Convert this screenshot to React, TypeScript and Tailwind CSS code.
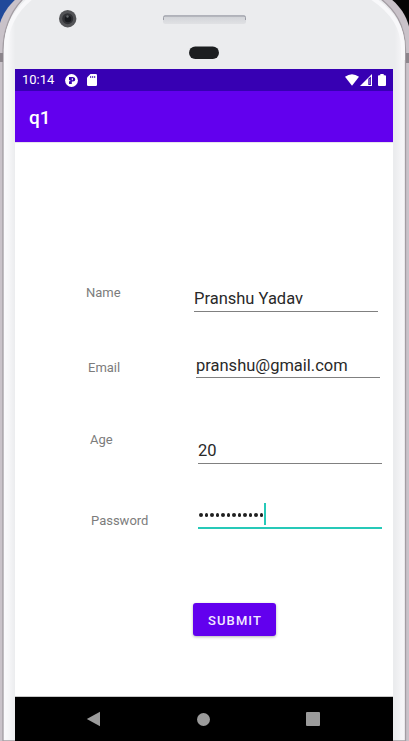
import type { ReactNode } from "react";

function PhoneShell() {
  return (
    <svg className="pointer-events-none absolute inset-0" width="409" height="741" viewBox="0 0 409 741" aria-hidden="true">
      <defs>
        <linearGradient id="face" gradientUnits="userSpaceOnUse" x1="4" y1="0" x2="406" y2="0">
          <stop offset="0" stopColor="#fafafc" />
          <stop offset="0.012" stopColor="#f6f6f8" />
          <stop offset="0.028" stopColor="#ebecee" />
          <stop offset="0.972" stopColor="#ebecee" />
          <stop offset="0.988" stopColor="#f4f4f6" />
          <stop offset="1" stopColor="#f7f6f8" />
        </linearGradient>
        <linearGradient id="speaker" x1="0" y1="0" x2="0" y2="1">
          <stop offset="0" stopColor="#c3c5cb" />
          <stop offset="0.3" stopColor="#d4d6da" />
          <stop offset="1" stopColor="#e0e1e4" />
        </linearGradient>
      </defs>
      <rect width="100" height="60" fill="#20499a" />
      <rect x="300" width="109" height="80" fill="#050505" />
      <path d="M-3 741V43C-3 20 7 5 22 -6H384C400 4 411 19 411 43V741Z" fill="#c9c2c9" />
      <path d="M3 741V50C3.500 26 12 9 26 -4H377C395 9 405.500 25 405.500 50V741Z" fill="url(#face)" stroke="#a39da3" strokeWidth="1.300" />
      <path d="M6 60V48C6 27 15 11 31 -2M403 60V48C403 27 392 11 372 -2" fill="none" stroke="#f8f8fa" strokeWidth="4" />
      <path d="M0 53H3V62H0ZM406 53H409V63H406Z" fill="#8c858c" />
      <circle cx="67.700" cy="18.700" r="8.700" fill="#535457" />
      <circle cx="67.700" cy="18.700" r="5.500" fill="#303135" />
      <circle cx="68" cy="19" r="3.300" fill="#17191d" />
      <circle cx="67.500" cy="16.500" r="1.200" fill="#65696b" />
      <rect x="163" y="15" width="83" height="9" rx="2.500" fill="url(#speaker)" />
      <path d="M163.500 20V17.500Q163.500 16 165 16H244Q245.500 16 245.500 17.500V20" fill="none" stroke="#9b9da6" />
      <rect x="189" y="46.500" width="30" height="12.500" rx="6.250" fill="#1c1e20" />
    </svg>
  );
}

function StatusBar() {
  return (
    <div className="flex h-[22px] items-center justify-between bg-[#3700b3] pr-[7px] pl-[7px] text-white">
      <div className="flex items-center">
        <span className="w-[43px] text-[13px] leading-[22px]">10:14</span>
        <svg width="13" height="13" viewBox="0 0 13 13">
          <circle cx="6.500" cy="6.500" r="6.400" fill="#fff" />
          <path d="M4 3H8Q10.300 3.200 10.300 5.300Q10.300 7.400 8 7.600H6.800V10H4Z" fill="#3700b3" />
          <path d="M6.800 4.200H7.800V6.200H6.800ZM4 6.300H5.300V7.300H4Z" fill="#fff" />
        </svg>
        <svg className="ml-[9px]" width="10" height="12" viewBox="0 0 10 12">
          <path d="M3.500 0H8.800Q10 0 10 1.200V10.800Q10 12 8.800 12H1.200Q0 12 0 10.800V3.500Z" fill="#fff" />
          <path d="M3.700 2V4M5.700 2V4M7.700 2V4" stroke="#3700b3" strokeWidth="0.900" />
        </svg>
      </div>
      <div className="flex items-center">
        <svg width="14" height="12" viewBox="0 0 14 12">
          <path d="M0 2.800Q7-2.200 14 2.800L7 11.800Z" fill="#fff" />
        </svg>
        <svg className="ml-[1px]" width="12" height="12" viewBox="0 0 12 12">
          <path d="M12 0V12H0Z" fill="#fff" />
          <path d="M8.300 4.800L10.900 2.400V10.900H8.300Z" fill="#3700b3" />
          <path d="M9.700 5V10" stroke="#a58fdd" strokeWidth="0.700" />
        </svg>
        <svg className="ml-[6px]" width="8" height="12" viewBox="0 0 8 12">
          <path d="M2.300 0H5.700V1.300H7Q8 1.300 8 2.300V11Q8 12 7 12H1Q0 12 0 11V2.300Q0 1.300 1 1.300H2.300Z" fill="#fff" />
        </svg>
      </div>
    </div>
  );
}

function Label({ className, children }: { className: string; children: ReactNode }) {
  return <span className={`block shrink-0 text-[13px] leading-4 text-[#7c7c7c] ${className}`}>{children}</span>;
}

function Field({ className, children }: { className: string; children: ReactNode }) {
  return <div className={`w-[184px] shrink-0 border-b border-[#808080] text-[16.5px] leading-5 text-[#292929] ${className}`}>{children}</div>;
}

export default function App() {
  return (
    <main className="relative flex h-[741px] w-[409px] flex-col overflow-hidden bg-[#ebecee] pt-[69px] font-['Roboto',sans-serif]">
      <PhoneShell />
      <div className="relative mx-[15px] flex h-[672px] w-[378px] flex-col bg-white">
        <StatusBar />
        <header className="flex h-[51px] items-center bg-[#6200ee] pl-[14px] pt-[3px] text-[19px] font-medium text-white">q1</header>
        <form className="flex h-[554px] flex-col border-t border-[#e6e3eb] pt-[141px]">
          <div className="flex h-[74px] items-start pl-[71px]">
            <Label className="mt-[1px] w-[108px]">Name</Label>
            <Field className="mt-[4px] h-[24px] pt-[1px]">Pranshu Yadav</Field>
          </div>
          <div className="flex h-[73px] items-start pl-[73px]">
            <Label className="mt-[2px] w-[108px]">Email</Label>
            <Field className="-mt-[4px] h-[24px] pt-[2px]">pranshu@gmail.com</Field>
          </div>
          <div className="flex h-[80px] items-start pl-[75px]">
            <Label className="mt-[1px] w-[108px]">Age</Label>
            <Field className="mt-[9px] h-[24px] pt-[1px]">20</Field>
          </div>
          <div className="flex h-[91px] items-start pl-[76px]">
            <Label className="mt-[2px] w-[107px]">Password</Label>
            <div className="-mt-[8px] flex h-[26px] w-[184px] shrink-0 items-start border-b-2 border-[#26c9b8] pl-[1px]">
              <div className="flex h-[24px] items-center gap-[2px]">
                {Array.from({ length: 12 }, (_, i) => (
                  <span key={i} className="h-[3.500px] w-[3.500px] rounded-full bg-[#202020]" />
                ))}
              </div>
              <span className="ml-[1px] h-[22px] w-[2px] bg-[#26c9b8]" />
            </div>
          </div>
          <button type="button" className="ml-[177.5px] mt-[1px] h-[33px] w-[83px] rounded-[3px] bg-[#6200ee] pl-[8px] pt-[2px] text-[13px] font-medium tracking-[1.1px] text-[#f2eaff] shadow-[0_1px_3px_rgba(0,0,0,0.3)] pr-[6px]">
            SUBMIT
          </button>
        </form>
        <nav className="flex h-[45px] items-center border-t border-[#c8c8c8] bg-black pl-[71px] text-[#9b9b9b]">
          <svg width="15" height="16" viewBox="0 0 15 16">
            <path d="M14 0.800V15.200L0.800 8Z" fill="currentColor" />
          </svg>
          <span className="ml-[96px] h-[13px] w-[13px] rounded-full bg-[#9b9b9b]" />
          <span className="ml-[96px] h-[14px] w-[14px] rounded-[1px] bg-[#9b9b9b]" />
        </nav>
      </div>
    </main>
  );
}
